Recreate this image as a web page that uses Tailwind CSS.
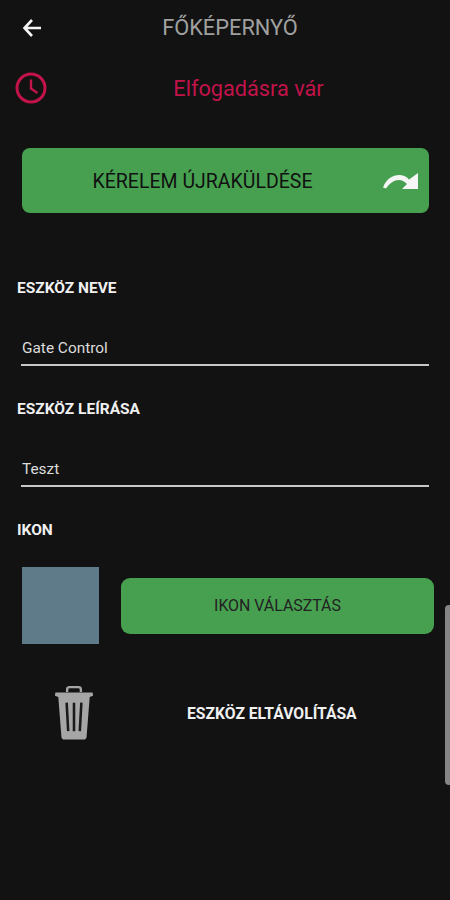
<!DOCTYPE html>
<html>
<head>
<meta charset="utf-8">
<script src="https://cdn.jsdelivr.net/npm/@tailwindcss/browser@4"></script>
</head>
<body class="bg-[#121212]">
<div class="relative w-[450px] h-[900px] overflow-hidden bg-[#121212] font-['Roboto',sans-serif]">
  <header class="h-[56px] flex items-center pl-[22px]">
    <svg class="w-[20px] h-[20px] shrink-0" viewBox="0 0 20 20" fill="none" stroke="#f5f5f5" stroke-width="2.6"><path d="M19 10H2.5M10 2 2.5 10l7.5 8"/></svg>
    <h1 class="w-[376px] text-center text-[21.8px] leading-[24px] text-[#a0a0a0]">FŐKÉPERNYŐ</h1>
  </header>
  <div class="h-[32px] mt-[16px] flex items-center pl-[15px]">
    <svg class="w-[32px] h-[32px] shrink-0" viewBox="0 0 32 32" fill="none" stroke="#c2134a"><circle cx="16" cy="16" r="14" stroke-width="3"/><path d="M16 7.5V16.5L22.5 21" stroke-width="2.4"/></svg>
    <p class="w-[410px] pt-[2px] text-center text-[21.7px] leading-[24px] text-[#c2134a]">Elfogadásra vár</p>
  </div>
  <button class="flex items-center ml-[22px] mt-[44px] w-[407px] h-[65px] rounded-[8px] bg-[#46a04f] text-[#111111] relative">
    <span class="w-[361px] pt-[2px] text-center text-[19.5px] leading-[22px]">KÉRELEM ÚJRAKÜLDÉSE</span>
    <svg class="w-[35px] h-[16px] shrink-0" viewBox="0 0 35 16"><path d="M0 14.500C3 6 10 2 16 2c4 0 7 1 10 4.500L35 0v16H19l5-5c-2-2-5-4-8-4-5 0-9 3-13 8.500z" fill="#f5f5f5"/></svg>
  </button>
  <section class="mt-[66px] pl-[17px]">
    <h2 class="text-[15.5px] leading-[18px] font-bold text-[#f0f0f0]">ESZKÖZ NEVE</h2>
    <div class="mt-[40px] ml-[4px] w-[408px] h-[29px] pt-[1px] border-b-2 border-[#c8c8c8] text-[15.4px] leading-[20px] text-[#dcdcdc] pl-[1px]">Gate Control</div>
  </section>
  <section class="mt-[34px] pl-[17px]">
    <h2 class="text-[15.5px] leading-[18px] font-bold text-[#f0f0f0]">ESZKÖZ LEÍRÁSA</h2>
    <div class="mt-[40px] ml-[4px] w-[408px] h-[29px] pt-[1px] border-b-2 border-[#c8c8c8] text-[15.4px] leading-[20px] text-[#dcdcdc] pl-[1px]">Teszt</div>
  </section>
  <section class="mt-[34px] pl-[17px]">
    <h2 class="text-[15.5px] leading-[18px] font-bold text-[#f0f0f0]">IKON</h2>
  </section>
  <div class="mt-[28px] pl-[22px] flex items-center">
    <div class="w-[77px] h-[77px] bg-[#5f7a88]"></div>
    <button class="ml-[22px] w-[313px] h-[56px] rounded-[9px] bg-[#46a04f] text-[15.9px] text-[#222222]">IKON VÁLASZTÁS</button>
  </div>
  <div class="mt-[42px] flex items-center pl-[54px]">
    <svg class="w-[40px] h-[54px] shrink-0" viewBox="0 0 40 55"><path fill="none" stroke="#a6a6a6" stroke-width="2.4" d="M13 6V3.500C13 2 14 1.200 15.500 1.200h9C26 1.200 27 2 27 3.500V6"/><path fill="#a6a6a6" d="M1 6.500h38l.4 3.500-3.400 1.200L32.800 52c-.2 1.600-1.200 2.600-2.800 2.600H10c-1.600 0-2.600-1-2.800-2.600L4 11.200.6 10z"/><path stroke="#1a1a1a" stroke-width="2.600" d="M12.500 17l1.600 29M20 17v29M27.500 17l-1.600 29"/></svg>
    <p class="ml-[93px] pt-[2px] text-[15.7px] leading-[18px] font-bold text-[#f0f0f0]">ESZKÖZ ELTÁVOLÍTÁSA</p>
  </div>
  <div class="absolute left-[445px] top-[605px] w-[8px] h-[180px] rounded-[5px] bg-[#858585]"></div>
</div>
</body>
</html>
